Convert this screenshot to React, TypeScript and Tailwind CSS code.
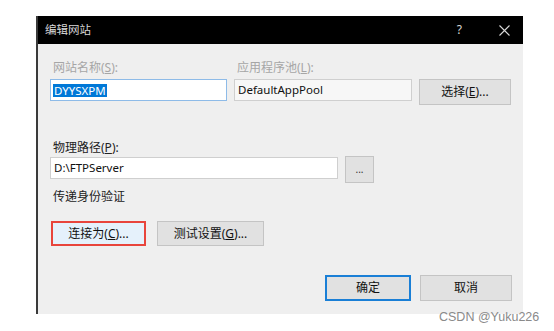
import React from 'react';

const font = { fontFamily: '"Noto Sans", "Noto Sans CJK SC", sans-serif' };

const Key: React.FC<{ k: string }> = ({ k }) => <span className="underline underline-offset-1">{k}</span>;

export default function App() {
  return (
    <div className="relative w-[554px] h-[331px] bg-white overflow-hidden" style={font}>
      <div className="pt-[16px] pl-[36px]">
        {/* dialog */}
        <div className="w-[487px] h-[298px] flex flex-col bg-[#efefef] border-l-2 border-[#3a3a3a]">
          {/* title bar */}
          <div className="h-[28px] bg-black flex items-center text-[#d8d8d8] shrink-0">
            <span className="ml-[7px] text-[11.5px] leading-none">编辑网站</span>
            <span className="ml-auto mr-[37px] text-[12px] leading-none">?</span>
            <svg width="11" height="11" viewBox="0 0 11 11" className="mr-[13px]">
              <path d="M0.5 0.5 L10.5 10.5 M10.5 0.5 L0.5 10.5" stroke="#d8d8d8" strokeWidth="1.1" />
            </svg>
          </div>

          {/* body */}
          <div className="flex flex-col pl-[12px] text-[12px] leading-[14px]">
            <div className="mt-[17px] grid grid-cols-[177px_178px_92px] gap-x-[7px]">
              <span className="pl-[3px] text-[#a6a6a6]">网站名称(<Key k="S" />):</span>
              <span className="pl-[3px] text-[#a6a6a6]">应用程序池(<Key k="L" />):</span>
              <span />
              <div className="mt-[4px] h-[22px] bg-white border border-[#8ebbe8] flex items-center pl-[2px] text-[11.5px]">
                <span className="bg-[#0078d7] text-white px-[1px] leading-[13px]">DYYSXPM</span>
              </div>
              <div className="mt-[4px] h-[22px] bg-[#f7f7f7] border border-[#cfcfcf] flex items-center pl-[3px] text-[#111] text-[11.5px]">
                DefaultAppPool
              </div>
              <button className="mt-[4px] h-[26px] bg-[#e1e1e1] border border-[#c4c4c4] text-[#111] flex items-center justify-center">
                选择(<Key k="E" />)...
              </button>
            </div>

            <span className="mt-[36px] pl-[3px] text-[#222]">物理路径(<Key k="P" />):</span>
            <div className="mt-[1px] flex items-start">
              <div className="mt-[1px] w-[288px] h-[22px] bg-white border border-[#cfcfcf] flex items-center pl-[3px] text-[#111] text-[11.5px]">
                D:\FTPServer
              </div>
              <button className="ml-[7px] w-[29px] h-[27px] bg-[#e1e1e1] border border-[#c4c4c4] text-[#333] text-[10px] leading-none flex items-center justify-center pb-[2px]">
                ...
              </button>
            </div>

            <span className="mt-[7px] pl-[3px] text-[#222]">传递身份验证</span>

            <div className="mt-[17px] flex items-start pl-[1px]">
              <button className="w-[95px] h-[25px] bg-[#e5f1fb] border-2 border-[#e8453c] text-[#111] flex items-center justify-center">
                连接为(<Key k="C" />)...
              </button>
              <button className="ml-[11px] w-[107px] h-[25px] bg-[#e1e1e1] border border-[#c4c4c4] text-[#111] flex items-center justify-center">
                测试设置(<Key k="G" />)...
              </button>
            </div>

            <div className="mt-[29px] flex justify-end pr-[11px] gap-[9px]">
              <button className="w-[86px] h-[26px] bg-[#e1e1e1] border-2 border-[#1a7fd6] text-[#111] flex items-center justify-center">
                确定
              </button>
              <button className="w-[92px] h-[26px] bg-[#e1e1e1] border border-[#c4c4c4] text-[#111] flex items-center justify-center">
                取消
              </button>
            </div>
          </div>
        </div>
      </div>

      {/* watermark */}
      <span
        className="absolute left-[439px] top-[310px] text-[12.5px] leading-[14px] text-[#8a8a8a]"
        style={{ fontFamily: '"Liberation Sans", Arial, sans-serif' }}
      >
        CSDN @Yuku226
      </span>
    </div>
  );
}
